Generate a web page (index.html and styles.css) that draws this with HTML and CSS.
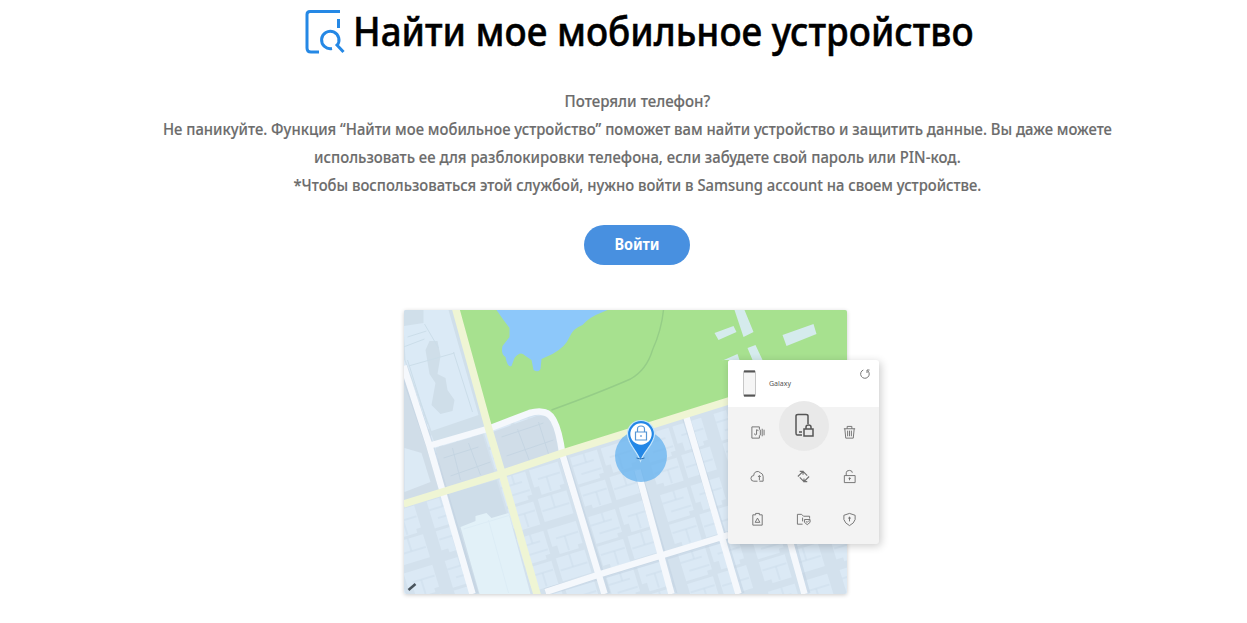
FILE: index.html
```html
<!DOCTYPE html>
<html lang="ru">
<head>
<meta charset="utf-8">
<title>Найти мое мобильное устройство</title>
<link rel="stylesheet" href="styles.css">
</head>
<body>
<main class="page">
  <h1 class="title">
    <svg class="logo" viewBox="0 0 40 46" fill="none" stroke="#2588e5" stroke-width="3"><path d="M35 2.500H5Q2 2.500 2 5.500V39Q2 43 6 43H14M33.500 10V19M27 39.500A8.700 8.700 0 1 1 32 36.500M31 35L38.500 43"/></svg>
    <span class="title-text">Найти мое мобильное устройство</span>
  </h1>
  <div class="intro">
    <p class="line line-a">Потеряли телефон?</p>
    <p class="line line-b">Не паникуйте. Функция “Найти мое мобильное устройство” поможет вам найти устройство и защитить данные. Вы даже можете</p>
    <p class="line line-c">использовать ее для разблокировки телефона, если забудете свой пароль или PIN-код.</p>
    <p class="line line-d">*Чтобы воспользоваться этой службой, нужно войти в Samsung account на своем устройстве.</p>
  </div>
  <button class="login"><span class="login-text">Войти</span></button>
  <div class="preview">
    <svg class="map" viewBox="403.5 310 443 284">
      <defs>
        <pattern id="blocks" width="75" height="62" patternUnits="userSpaceOnUse" patternTransform="translate(562 457) rotate(-17)">
          <rect width="75" height="62" fill="#d3e1ed"/>
          <path d="M7 3H35V27H30V31H7ZM39 3H69V26H64V30H44V21H39ZM7 34H34V58H14V54H7ZM39 33H69V57H39Z" fill="#dbe9f5"/>
          <path d="M7 12H29M13 22H34M21 3V12M45 14H68M54 14V29M8 43H33M22 43V57M40 46H68M53 33V46" stroke="#cddeeb" stroke-width="1"/>
        </pattern>
      </defs>
      <path d="M403 310H847V594H403Z" fill="url(#blocks)"/>
      <path d="M403 310H453L487 427L434 443L403 358Z" fill="#d0dfea"/>
      <path d="M403 326L423 323V310H448L478 415L431 431L405 360Z" fill="#dbeaf6"/>
      <path d="M425 350L429 341H437L440 356L437 374L445 378L447 390L454 400L452 411L440 414L431 405L435 383L429 374Z" fill="#cfdee9"/>
      <path d="M403 347L424 339M408 366L454 353M424 324L438 348M453 352L472 412M407 337L426 331M407 360L427 424" stroke="#cbdde9" fill="none"/>
      <path d="M403 370L430 447L442 490L403 502Z" fill="#d0dde8"/>
      <path d="M404 448L421 453L430 482L404 492Z" fill="#dceaf5"/>
      <path d="M435 448L482 434L494 473L444 489ZM492 432L536 416Q550 413 554 430L558 453L504 470Z" fill="#d0dde8"/>
      <path d="M443 458L478 447M450 476L490 462M452 448L460 480M468 443L480 475M501 437L543 423M506 456L553 440M517 429L529 461M538 422L548 454" stroke="#c5d5e2" fill="none"/>
      <path d="M447 494L496 480L530 594H475Z" fill="#cedde9"/>
      <path d="M460 527L475 521V516L486 513L491 518L508 513L530 594H479Z" fill="#e2f1f8"/>
      <path d="M463 529L510 515M488 520L508 593" stroke="#dcecf5" fill="none"/>
      <path d="M458 310H847V368L728 403L562 452L558 430Q555 411 544 409Q535 409 490 425Z" fill="#a7e18f"/>
      <path d="M496 310L503 320L509 328V337L502 346Q500 354 505 357Q507 368 511 366L514 358Q520 350 525 356L531 360L533 370Q538 373 540 369L541 359L552 354Q565 347 569 337Q573 328 582 325Q589 317 600 313L607 310Z" fill="#8dc8fa"/>
      <path d="M551 410Q598 393 630 379Q646 370 652 350Q661 330 663 310" stroke="#95cd87" stroke-width="1.400" fill="none"/>
      <path d="M714 333L733 326L736 332L718 340ZM734 310H744L753 332L743 337ZM782 335L813 324L816 334L786 346ZM721 361L737 354L739 360H723ZM747 348L755 345L762 360H752Z" fill="#d5ebed"/>
      <g fill="none" stroke="#bfd0df" stroke-width="8" opacity=".5">
        <path d="M403 370L430 447L474 594M562 454L606 594M637 470L673 594M685 416L740 594M791 540L806 594M545 592L728 537"/>
      </g>
      <g fill="none" stroke="#f5f8fc" stroke-width="6.500">
        <path d="M403 366L429 446L472 594M428 446L490 428L529 413Q547 408 553 420Q559 431 562 455L604 594M637 470L671 594M685 414L738 594M789 540L804 594M545 592L600 574L728 535"/>
      </g>
      <g fill="none" stroke="#eff5d4" stroke-width="7.500">
        <path d="M403 504L500 474L562 453L728 401L760 391M455 308L488 428L502 475L537 596"/>
      </g>
      <circle cx="640.500" cy="456" r="26" fill="#64b1ef" opacity=".75"/>
      <path d="M640 461C636 450 627 444 627 434A13.500 13.500 0 0 1 654 434C654 444 644 450 640 461Z" fill="#2387e6" stroke="#c5e6fc" stroke-width="1.200"/>
      <circle cx="640.500" cy="434" r="10.700" fill="white"/>
      <path d="M635 432H646V440H635ZM637 432V429Q637 426 640.500 426Q644 426 644 429V432M640.500 435V437" fill="none" stroke="#5697d5" stroke-width="1.200"/>
      <path d="M636 458Q640 460 644 458" fill="none" stroke="#286eb1"/>
      <path d="M408 590L415 584" stroke="#48535c" stroke-width="2.500"/>
    </svg>
    <section class="card">
      <header class="card-head">
        <svg class="phone" viewBox="0 0 14 28"><rect x=".5" y=".5" width="12" height="26" rx="1.500" fill="#f5f5f5" stroke="#c7c7c7"/><path d="M1 1.500H12M1 25.500H12" stroke="#555" stroke-width="2"/></svg>
        <span class="device">Galaxy</span>
        <svg class="refresh" viewBox="0 0 12 12" fill="none" stroke="#777"><path d="M4.300 2A4.300 4.300 0 1 0 8.700 2.700M8 5V2H10.500"/></svg>
      </header>
      <div class="actions">
        <svg class="icon" viewBox="0 0 16 16"><path d="M10 5V2H2V14H10V11M7 5V10M7 5L9 6M5 9A1 1 0 1 0 7 10M11 5V11M13 4V12M15 5V11"/></svg>
        <div class="selected"><svg class="lock-phone" viewBox="0 0 22 26"><path d="M8 22H3Q2 22 2 20V3Q2 1.500 4 1.500H12Q14 1.500 14 3V11M5 19H8M10 16H19V23H10ZM12 16V14Q12 12 14.500 12Q17 12 17 14V16"/></svg></div>
        <svg class="icon" viewBox="0 0 16 16"><path d="M2 4H14M5.500 4V1.500H10.500V4M3 4L4 14H12L13 4M6 6V12M8 6V12M10 6V12"/></svg>
        <svg class="icon" viewBox="0 0 16 16"><path d="M8 13H4A3 3 0 0 1 4 7A4 4 0 0 1 11 4Q14 5 14 8V13H10M10 12V7M8.500 8.500L10 7L11.500 8.500"/></svg>
        <svg class="icon swap" viewBox="0 0 16 16"><path d="M2 8L7.500 2.500M4 2.500H7.500V6M7.500 2.500L12 7M4 9L8.500 13.500L14 8M8.500 10V13.500H12"/></svg>
        <svg class="icon" viewBox="0 0 16 16"><path d="M2.500 7H14V14.500H2.500ZM4.500 7V4Q4.500 1.500 8 1.500Q11 1.500 11 4M8 9V12M7 10H9.500"/></svg>
        <svg class="icon" viewBox="0 0 16 16"><path d="M3 3H6V1.500H10V3H13V14H3ZM5.500 11L8 6.500L10.500 11H5.500"/></svg>
        <svg class="icon" viewBox="0 0 16 16"><path d="M7 13H1.500V2.500H6L8 4.500H14.500V7M7 6V10M9 8H15V11L12 13.500L9 11ZM10.500 10L12 11L14 9"/></svg>
        <svg class="icon" viewBox="0 0 16 16"><path d="M8 1.500L14 3.500V8Q13 12 8 14.500Q3 12 2 8V3.500ZM8 5V10M6.500 6.500H9.500"/></svg>
      </div>
    </section>
  </div>
</main>
</body>
</html>
```
FILE: styles.css
```css
body {
  margin: 0;
  overflow: hidden;
  background: #fff;
  font-family: "Noto Sans", "Open Sans", sans-serif;
}
.page {
  display: flex;
  flex-direction: column;
  align-items: center;
  width: 1274px;
  height: 623px;
}
.title {
  display: flex;
  gap: 8px;
  width: 664px;
  height: 64px;
  margin: 0 0 23px;
  color: #000;
  font-size: 40px;
  font-weight: 500;
  line-height: 62px;
  white-space: nowrap;
}
.title-text { transform: scaleX(.92); transform-origin: left; -webkit-text-stroke: .5px #000; }
.logo { flex: none; width: 40px; height: 46px; margin-top: 9px; }
.intro { color: #6c6c6c; font-size: 16px; font-weight: 500; line-height: 28px; }
.line { margin: 0; text-align: center; white-space: nowrap; -webkit-text-stroke: .15px #6c6c6c; }
.line-a { transform: scaleX(.942); }
.line-b { transform: scaleX(.926); }
.line-c { transform: scaleX(.93); }
.line-d { transform: scaleX(.924); }
.login {
  width: 106px;
  height: 40px;
  margin: 26px 0 45px;
  padding: 0 0 2px;
  border: 0;
  border-radius: 20px;
  background: #4890e0;
  color: #fff;
  font: 700 16px "Noto Sans", sans-serif;
}
.login-text { display: block; transform: scaleX(.9); }
.preview { position: relative; width: 466px; height: 284px; }
.map { display: block; width: 443px; height: 284px; border-radius: 2px; box-shadow: 0 1px 4px #0003; }
.card {
  position: absolute;
  left: 324px;
  top: 50px;
  width: 151px;
  height: 184px;
  border-radius: 3px;
  background: #f3f3f3;
  box-shadow: 2px 2px 8px #0003;
}
.card-head { display: flex; height: 47px; border-radius: 3px 3px 0 0; background: #fff; }
.phone { width: 14px; height: 28px; margin: 10px 12px 0 15px; }
.device { width: 78px; margin-top: 18px; color: #555; font-size: 7px; line-height: 12px; }
.refresh { width: 12px; height: 12px; margin: 8px 0 0 12px; }
.actions { display: grid; grid-template-columns: repeat(3, 46px); grid-template-rows: repeat(3, 43.5px); padding: 4px 6.5px; place-items: center; }
.icon { width: 15px; height: 15px; fill: none; stroke: #707070; stroke-width: 1; }
.swap { stroke-width: 1.2; }
.selected { display: grid; place-items: center; width: 50px; height: 50px; margin: -14px -2px 0; border-radius: 50%; background: #e9e9e9; }
.lock-phone { width: 22px; height: 26px; margin: 1px 0 0 2px; fill: none; stroke: #555; stroke-width: 1.5; }
```
